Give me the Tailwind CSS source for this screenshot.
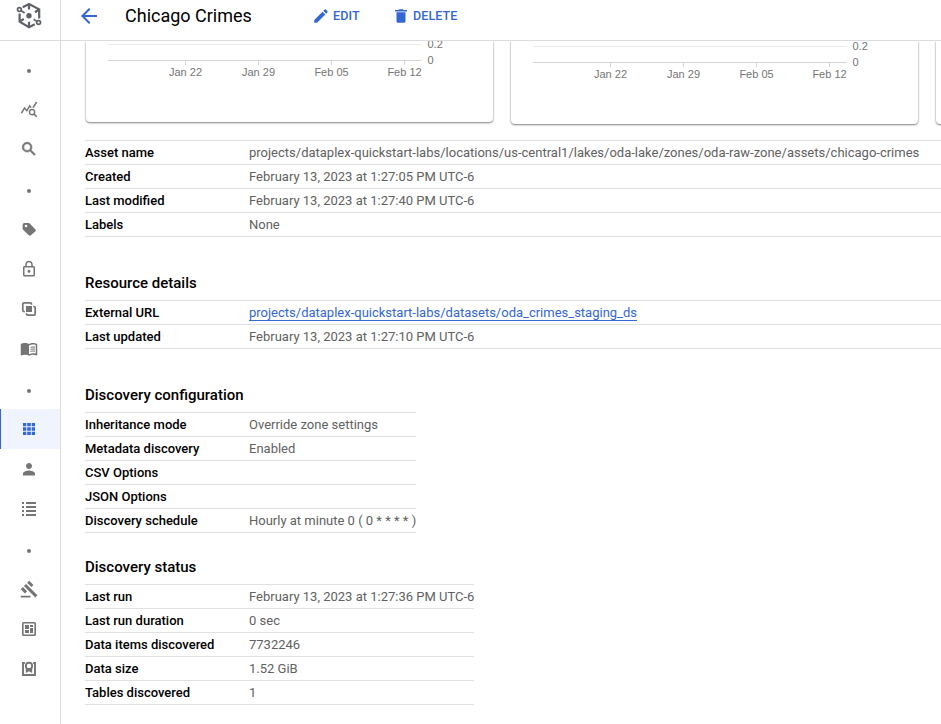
<!DOCTYPE html>
<html lang="en">
<head>
<meta charset="utf-8">
<title>Chicago Crimes</title>
<script src="https://cdn.jsdelivr.net/npm/@tailwindcss/browser@4"></script>
</head>
<body class="bg-white">
<div class="flex h-[724px] w-[941px] flex-col overflow-hidden font-['Roboto',sans-serif] text-[13px] text-[#616161]">
  <header class="flex h-[41px] shrink-0 border-b border-[#dadce0]">
    <div class="w-[61px] shrink-0 border-r border-[#dadce0] pt-0.5 pl-4">
      <svg class="h-7 w-[26px]" viewBox="16 2 26 28" fill="none" stroke="#5f6368" stroke-width="2.2">
        <path d="M22.700 7.200 29 4l10.200 5.400v9M19.600 13.400v8.200L29 27.200l5.800-2.900M29 4v5.400M39.200 9.500 35 12.200M29 21.800v5.400M19.400 21.600l4.400-2.600"/>
        <path stroke-width="1.700" d="M21.300 10.800l3.300 2.200M36.800 21.400l-3.200-2.200"/>
        <circle cx="19.400" cy="9.600" r="1.900" stroke-width="1.700"/><circle cx="38.600" cy="22.500" r="1.900" stroke-width="1.700"/>
        <circle cx="29" cy="15.800" r="2.700" fill="#5f6368" stroke="none"/>
      </svg>
    </div>
    <div class="flex h-8 items-center pl-4">
      <svg class="size-6" viewBox="0 0 24 24" fill="#3367d6"><path d="M20 11H7.830l5.590-5.590L12 4l-8 8 8 8 1.410-1.410L7.830 13H20v-2z"/></svg>
      <h1 class="ml-6 w-[187px] text-lg leading-8 text-black">Chicago Crimes</h1>
      <div class="flex w-[80px] items-center text-[#3367d6]">
        <svg class="size-[18px]" viewBox="0 0 24 24" fill="#3367d6"><path d="M3 17.250V21h3.750L17.810 9.940l-3.750-3.750L3 17.250zM20.710 7.040a1 1 0 0 0 0-1.410l-2.340-2.340a1 1 0 0 0-1.410 0l-1.830 1.830 3.750 3.750 1.830-1.830z"/></svg>
        <span class="ml-[3px] text-[12.500px] font-medium tracking-[0.1px]">EDIT</span>
      </div>
      <div class="flex items-center text-[#3367d6]">
        <svg class="size-[18px]" viewBox="0 0 24 24" fill="#3367d6"><path d="M6 19c0 1.100.9 2 2 2h8c1.100 0 2-.9 2-2V7H6v12zM20 4h-4.500l-1-1h-5l-1 1H4v2h16V4z"/></svg>
        <span class="ml-[3px] text-[12.500px] font-medium tracking-[0.1px]">DELETE</span>
      </div>
    </div>
  </header>
  <div class="flex min-h-0 flex-1">
    <nav class="flex w-[61px] shrink-0 flex-col border-r border-[#dadce0] pt-2 text-[#757575]">
      <div class="flex h-10 items-center pt-1 pl-[27px]"><i class="size-1 rounded-full bg-[#757575]"></i></div>
      <div class="flex h-10 items-center pl-5"><svg class="size-[18px]" viewBox="0 0 24 24" fill="currentColor"><path d="M19.880 18.470c.44-.7.7-1.510.7-2.390 0-2.490-2.010-4.500-4.500-4.500s-4.500 2.010-4.500 4.500 2.010 4.500 4.490 4.500c.88 0 1.700-.26 2.390-.7L21.580 23 23 21.580l-3.120-3.110zm-3.800.11a2.500 2.500 0 1 1 0-5 2.500 2.500 0 0 1 0 5zm-.36-8.500c-.74.02-1.450.18-2.100.45l-.55-.83-3.800 6.180-3.010-3.520-3.630 5.810L1 17l5-8 3 3.500L13 6l2.720 4.080zm2.590.5c-.64-.28-1.330-.45-2.050-.49L21.380 2 23 3.180l-4.690 7.400z"/></svg></div>
      <div class="flex h-10 items-center pl-5"><svg class="size-[18px]" viewBox="0 0 24 24" fill="currentColor"><path stroke="currentColor" stroke-width=".9" d="M15.500 14h-.79l-.28-.27A6.471 6.471 0 0 0 16 9.500 6.500 6.500 0 1 0 9.500 16c1.610 0 3.090-.59 4.230-1.570l.27.28v.79l5 4.990L20.490 19l-4.990-5zm-6 0C7.010 14 5 11.990 5 9.500S7.010 5 9.500 5 14 7.010 14 9.500 11.990 14 9.500 14z"/></svg></div>
      <div class="flex h-10 items-center pt-1 pl-[27px]"><i class="size-1 rounded-full bg-[#757575]"></i></div>
      <div class="flex h-10 items-center pl-5"><svg class="size-[18px]" viewBox="0 0 24 24" fill="currentColor"><path fill-rule="evenodd" d="M20.600 12.700 13 4.600A2 2 0 0 0 11.500 4H6a2.500 2.500 0 0 0-2.500 2.500v5c0 .55.22 1.050.59 1.420l7.600 7.500c.78.78 2.040.78 2.820 0l6.100-5.400c.780-.78.780-1.540 0-2.320zM8 9.800a1.700 1.700 0 1 1 0-3.400 1.700 1.700 0 0 1 0 3.400z"/></svg></div>
      <div class="flex h-10 items-center pl-5"><svg class="size-[18px]" viewBox="0 0 24 24" fill="currentColor"><path d="M18 8h-1V6c0-2.760-2.240-5-5-5S7 3.240 7 6v2H6c-1.100 0-2 .9-2 2v10c0 1.100.9 2 2 2h12c1.100 0 2-.9 2-2V10c0-1.100-.9-2-2-2zM9 6c0-1.660 1.340-3 3-3s3 1.340 3 3v2H9V6zm9 14H6V10h12v10zm-6-3c1.100 0 2-.9 2-2s-.9-2-2-2-2 .9-2 2 .9 2 2 2z"/></svg></div>
      <div class="flex h-10 items-center pl-5"><svg class="size-[18px]" viewBox="0 0 18 18" fill="none" stroke="currentColor" stroke-width="1.700"><path d="M4.800 11.500H4a1.200 1.200 0 0 1-1.200-1.200V4A1.200 1.200 0 0 1 4 2.800h6.300A1.200 1.200 0 0 1 11.500 4v.8M13.200 6.500h.8a1.200 1.200 0 0 1 1.200 1.200V14a1.200 1.200 0 0 1-1.200 1.200H7.700A1.200 1.200 0 0 1 6.500 14v-.8"/><path fill="currentColor" stroke="none" d="M6 6h6v6H6z"/></svg></div>
      <div class="flex h-10 items-center pl-5"><svg class="size-[18px]" viewBox="0 0 24 24" fill="currentColor"><path d="M21 4.500c-1.110-.35-2.330-.5-3.500-.5-1.950 0-4.050.4-5.500 1.500C10.550 4.400 8.450 4 6.500 4S2.450 4.400 1 5.500v14.650c0 .25.25.5.5.5.1 0 .15-.05.25-.05C3.100 19.950 5.050 19.500 6.500 19.500c1.950 0 4.050.4 5.500 1.500 1.350-.85 3.800-1.500 5.500-1.500 1.650 0 3.350.3 4.750 1.050.1.05.15.05.25.05.25 0 .5-.25.5-.5V5.500c-.6-.45-1.250-.75-2-1zm0 13.500c-1.100-.35-2.300-.5-3.500-.5-1.700 0-4.150.65-5.500 1.500V7.500c1.350-.85 3.800-1.500 5.500-1.500 1.200 0 2.400.15 3.500.5V18z"/><path d="M14 9.200c2-.7 4-.8 6-.4v1.500c-2-.4-4-.3-6 .4zM14 11.900c2-.7 4-.8 6-.4V13c-2-.4-4-.3-6 .4zM14 14.600c2-.7 4-.8 6-.4v1.500c-2-.4-4-.3-6 .4z"/></svg></div>
      <div class="flex h-10 items-center pt-1 pl-[27px]"><i class="size-1 rounded-full bg-[#757575]"></i></div>
      <div class="flex h-10 items-center border-l border-[#3367d6] bg-[#eff4fe] pl-[19px] text-[#3367d6]"><svg class="size-[18px]" viewBox="0 0 18 18" fill="currentColor"><path d="M3 3h3.300v3.200H3zM7.200 3h3.600v3.200H7.200zM11.700 3H15v3.200h-3.300zM3 7.200h3.300v3.600H3zM7.200 7.200h3.600v3.600H7.200zM11.700 7.200H15v3.600h-3.300zM3 11.800h3.300V15H3zM7.200 11.800h3.600V15H7.200zM11.700 11.800H15V15h-3.300z"/></svg></div>
      <div class="flex h-10 items-center pl-5"><svg class="size-[18px]" viewBox="0 0 24 24" fill="currentColor"><path d="M12 12c2.210 0 4-1.790 4-4s-1.790-4-4-4-4 1.790-4 4 1.790 4 4 4zm0 2c-2.670 0-8 1.340-8 4v2.500h16V18c0-2.660-5.330-4-8-4z"/></svg></div>
      <div class="flex h-10 items-center pl-5"><svg class="size-[18px]" viewBox="0 0 18 18" fill="currentColor"><path d="M2 2h2v2H2zM6 2h10v2H6zM2 6h2v2H2zM6 6h10v2H6zM2 10h2v2H2zM6 10h10v2H6zM2 14h2v2H2zM6 14h10v2H6z"/></svg></div>
      <div class="flex h-10 items-center pt-1 pl-[27px]"><i class="size-1 rounded-full bg-[#757575]"></i></div>
      <div class="flex h-10 items-center pl-5"><svg class="size-[18px]" viewBox="0 0 24 24" fill="currentColor"><path d="M1 21h13v2.300H1zM5.245 8.070l2.830-2.827 15.200 15.200-2.828 2.828zM12.317 1l5.657 5.656-2.830 2.830-5.654-5.660zM3.825 9.485l5.657 5.657-2.828 2.828-5.657-5.657z"/></svg></div>
      <div class="flex h-10 items-center pl-5"><svg class="size-[18px]" viewBox="0 0 18 18" fill="currentColor"><path fill-rule="evenodd" d="M3.500 2h11A1.500 1.500 0 0 1 16 3.500v11a1.500 1.500 0 0 1-1.500 1.500h-11A1.500 1.500 0 0 1 2 14.500v-11A1.500 1.500 0 0 1 3.500 2zM3.600 3.600v10.800h10.800V3.600z"/><path d="M5 5h4v4H5zM10 5h3v2h-3zM5 10h4v3H5zM10 8h3v5h-3z"/></svg></div>
      <div class="flex h-10 items-center pl-5"><svg class="size-[18px]" viewBox="0 0 18 18" fill="none" stroke="currentColor" stroke-width="1.900"><path d="M4.800 3H3v12h12V3h-1.800"/><circle cx="9" cy="5.900" r="3.100"/><path fill="currentColor" stroke="none" d="M5.800 7.500h6.400V13L9 11.200 5.800 13z"/><circle cx="9" cy="5.900" r="2.200" fill="#fff" stroke="none"/></svg></div>
    </nav>
    <main class="min-w-0 flex-1 overflow-hidden pl-6">
      <section class="flex h-[99px] items-start gap-[17px] pl-px">
        <div class="h-[81px] w-[407px] shrink-0 rounded-b shadow-[0_1px_2px_rgba(0,0,0,0.45),0_0_2px_rgba(0,0,0,0.2)]">
          <svg class="h-[81px] w-[407px]" viewBox="86 41 407 81" font-family="Liberation Sans, Arial, sans-serif" font-size="11" fill="#757575">
            <path d="M108 44.500h313.500" stroke="#ebebeb"/><path d="M108 60.500h313.500M185.500 61v4M258.500 61v4M331.500 61v4M404.500 61v4" stroke="#d5d5d5"/>
            <text x="427.500" y="48">0.2</text><text x="427.500" y="64">0</text>
            <g text-anchor="middle"><text x="185.500" y="76">Jan 22</text><text x="258.500" y="76">Jan 29</text><text x="331.500" y="76">Feb 05</text><text x="404.500" y="76">Feb 12</text></g>
          </svg>
        </div>
        <div class="ml-px h-[83px] w-[407px] shrink-0 rounded-b shadow-[0_1px_2px_rgba(0,0,0,0.45),0_0_2px_rgba(0,0,0,0.2)]">
          <svg class="h-[83px] w-[407px]" viewBox="86 39 407 83" font-family="Liberation Sans, Arial, sans-serif" font-size="11" fill="#757575">
            <path d="M108 44.500h313.500" stroke="#ebebeb"/><path d="M108 60.500h313.500M185.500 61v4M258.500 61v4M331.500 61v4M404.500 61v4" stroke="#d5d5d5"/>
            <text x="427.500" y="48">0.2</text><text x="427.500" y="64">0</text>
            <g text-anchor="middle"><text x="185.500" y="76">Jan 22</text><text x="258.500" y="76">Jan 29</text><text x="331.500" y="76">Feb 05</text><text x="404.500" y="76">Feb 12</text></g>
          </svg>
        </div>
        <div class="ml-px h-[83px] w-[407px] shrink-0 rounded-b shadow-[0_1px_2px_rgba(0,0,0,0.45),0_0_2px_rgba(0,0,0,0.2)]"></div>
      </section>
      <dl class="border-t border-[#e0e0e0] leading-[23px] whitespace-nowrap">
        <div class="flex h-6 border-b border-[#e0e0e0]"><dt class="w-[164px] shrink-0 font-medium text-black">Asset name</dt><dd>projects/dataplex-quickstart-labs/locations/us-central1/lakes/oda-lake/zones/oda-raw-zone/assets/chicago-crimes</dd></div>
        <div class="flex h-6 border-b border-[#e0e0e0]"><dt class="w-[164px] shrink-0 font-medium text-black">Created</dt><dd>February 13, 2023 at 1:27:05 PM UTC-6</dd></div>
        <div class="flex h-6 border-b border-[#e0e0e0]"><dt class="w-[164px] shrink-0 font-medium text-black">Last modified</dt><dd>February 13, 2023 at 1:27:40 PM UTC-6</dd></div>
        <div class="flex h-6 border-b border-[#e0e0e0]"><dt class="w-[164px] shrink-0 font-medium text-black">Labels</dt><dd>None</dd></div>
      </dl>
      <h2 class="mt-[34px] mb-[5px] text-[15px] leading-6 font-medium text-black">Resource details</h2>
      <dl class="border-t border-[#e0e0e0] leading-[23px] whitespace-nowrap">
        <div class="flex h-6 border-b border-[#e0e0e0]"><dt class="w-[164px] shrink-0 font-medium text-black">External URL</dt><dd><a class="border-b border-[#3367d6] text-[#3367d6]">projects/dataplex-quickstart-labs/datasets/oda_crimes_staging_ds</a></dd></div>
        <div class="flex h-6 border-b border-[#e0e0e0]"><dt class="w-[164px] shrink-0 font-medium text-black">Last updated</dt><dd>February 13, 2023 at 1:27:10 PM UTC-6</dd></div>
      </dl>
      <h2 class="mt-[34px] mb-[5px] text-[15px] leading-6 font-medium text-black">Discovery configuration</h2>
      <dl class="w-[331px] border-t border-[#e0e0e0] leading-[23px] whitespace-nowrap">
        <div class="flex h-6 border-b border-[#e0e0e0]"><dt class="w-[164px] shrink-0 font-medium text-black">Inheritance mode</dt><dd>Override zone settings</dd></div>
        <div class="flex h-6 border-b border-[#e0e0e0]"><dt class="w-[164px] shrink-0 font-medium text-black">Metadata discovery</dt><dd>Enabled</dd></div>
        <div class="flex h-6 border-b border-[#e0e0e0]"><dt class="w-[164px] shrink-0 font-medium text-black">CSV Options</dt><dd></dd></div>
        <div class="flex h-6 border-b border-[#e0e0e0]"><dt class="w-[164px] shrink-0 font-medium text-black">JSON Options</dt><dd></dd></div>
        <div class="flex h-6 border-b border-[#e0e0e0]"><dt class="w-[164px] shrink-0 font-medium text-black">Discovery schedule</dt><dd>Hourly at minute 0 ( 0 * * * * )</dd></div>
      </dl>
      <h2 class="mt-[22px] mb-[5px] text-[15px] leading-6 font-medium text-black">Discovery status</h2>
      <dl class="w-[389px] border-t border-[#e0e0e0] leading-[23px] whitespace-nowrap">
        <div class="flex h-6 border-b border-[#e0e0e0]"><dt class="w-[164px] shrink-0 font-medium text-black">Last run</dt><dd>February 13, 2023 at 1:27:36 PM UTC-6</dd></div>
        <div class="flex h-6 border-b border-[#e0e0e0]"><dt class="w-[164px] shrink-0 font-medium text-black">Last run duration</dt><dd>0 sec</dd></div>
        <div class="flex h-6 border-b border-[#e0e0e0]"><dt class="w-[164px] shrink-0 font-medium text-black">Data items discovered</dt><dd>7732246</dd></div>
        <div class="flex h-6 border-b border-[#e0e0e0]"><dt class="w-[164px] shrink-0 font-medium text-black">Data size</dt><dd>1.52 GiB</dd></div>
        <div class="flex h-6 border-b border-[#e0e0e0]"><dt class="w-[164px] shrink-0 font-medium text-black">Tables discovered</dt><dd>1</dd></div>
      </dl>
    </main>
  </div>
</div>
</body>
</html>
